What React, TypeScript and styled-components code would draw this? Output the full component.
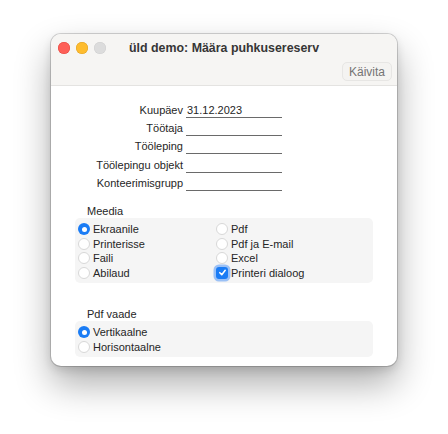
import { Fragment } from "react";
import styled, { createGlobalStyle } from "styled-components";

const Global = createGlobalStyle`
  html, body {
    margin: 0;
    background: #ffffff;
  }
  body {
    font-family: "Liberation Sans", "Noto Sans", sans-serif;
    color: #262626;
    -webkit-font-smoothing: antialiased;
  }
`;

const Page = styled.div`
  padding: 34px 0 0 51px;
  height: 434px;
  box-sizing: border-box;
`;

const Window = styled.div`
  width: 346px;
  height: 332px;
  border-radius: 10px;
  overflow: hidden;
  background: #ffffff;
  box-shadow: 0 0 0 1px rgba(0, 0, 0, 0.16), 0 18px 36px rgba(0, 0, 0, 0.32),
    0 4px 10px rgba(0, 0, 0, 0.12);
  display: flex;
  flex-direction: column;
`;

const TitleBar = styled.div`
  background: #f6f5f3;
  height: 52px;
  border-bottom: 1px solid #e4e3e1;
  box-sizing: border-box;
  display: grid;
  grid-template-rows: 27px 1fr;
`;

const TitleRow = styled.div`
  display: flex;
  align-items: center;
  padding: 1px 0 0 7px;
`;

const Lights = styled.div`
  display: flex;
  gap: 6px;
`;

const Light = styled.span<{ $c: string; $b: string }>`
  width: 12px;
  height: 12px;
  border-radius: 50%;
  background: ${(p) => p.$c};
  box-shadow: inset 0 0 0 0.5px ${(p) => p.$b};
`;

const Title = styled.div`
  margin-left: 23px;
  font-weight: 700;
  font-size: 12.4px;
  color: #363636;
`;

const ToolRow = styled.div`
  display: flex;
  justify-content: flex-end;
  align-items: flex-start;
  padding: 1px 5px 0 0;
`;

const ToolButton = styled.button`
  height: 19px;
  padding: 0 6px;
  font-family: inherit;
  font-size: 12px;
  color: #747474;
  background: #f4f3f1;
  border: 1px solid #e7e6e4;
  border-radius: 5px;
`;

const Content = styled.div`
  flex: 1;
  padding: 17px 24px 0 24px;
  font-size: 11px;
`;

const Fields = styled.div`
  display: grid;
  grid-template-columns: 108px 96px;
  column-gap: 3px;
  row-gap: 3.2px;
`;

const Label = styled.div`
  text-align: right;
  line-height: 15px;
`;

const Field = styled.div`
  line-height: 14px;
  height: 14px;
  border-bottom: 1px solid #6a6a6a;
  padding-left: 1px;
`;

const Section = styled.div<{ $top: number }>`
  margin-top: ${(p) => p.$top}px;
`;

const Legend = styled.div`
  padding-left: 12px;
  line-height: 13px;
`;

const Group = styled.div<{ $rows: number }>`
  background: #f5f5f5;
  border-radius: 5px;
  padding: 4px 3px 3px 3px;
  display: grid;
  grid-template-columns: repeat(2, 138px);
  grid-auto-flow: column;
  grid-template-rows: repeat(${(p) => p.$rows}, 14.5px);
`;

const Option = styled.label`
  display: flex;
  align-items: center;
  gap: 3px;
  line-height: 14px;
  white-space: nowrap;
`;

const Radio = styled.span<{ $on?: boolean }>`
  width: 12px;
  height: 12px;
  box-sizing: border-box;
  border-radius: 50%;
  flex: none;
  background: ${(p) => (p.$on ? "#1a7cf5" : "#ffffff")};
  border: ${(p) => (p.$on ? "none" : "1px solid #d8d8d8")};
  display: flex;
  align-items: center;
  justify-content: center;
  &::after {
    content: "";
    display: ${(p) => (p.$on ? "block" : "none")};
    width: 5px;
    height: 5px;
    border-radius: 50%;
    background: #fff;
  }
`;

const Check = styled.span`
  width: 12px;
  height: 12px;
  border-radius: 3px;
  flex: none;
  background: #1a7cf5;
  box-shadow: 0 0 0 2.5px rgba(80, 150, 245, 0.55);
  display: flex;
  align-items: center;
  justify-content: center;
`;

type Opt = { text: string; on?: boolean; check?: boolean };

const media: Opt[] = [
  { text: "Ekraanile", on: true },
  { text: "Printerisse" },
  { text: "Faili" },
  { text: "Abilaud" },
  { text: "Pdf" },
  { text: "Pdf ja E-mail" },
  { text: "Excel" },
  { text: "Printeri dialoog", check: true },
];

const pdfView: Opt[] = [{ text: "Vertikaalne", on: true }, { text: "Horisontaalne" }];

const fields: [string, string][] = [
  ["Kuupäev", "31.12.2023"],
  ["Töötaja", ""],
  ["Tööleping", ""],
  ["Töölepingu objekt", ""],
  ["Konteerimisgrupp", ""],
];

function OptionItem({ o }: { o: Opt }) {
  return (
    <Option>
      {o.check ? (
        <Check>
          <svg width="9" height="9" viewBox="0 0 10 10">
            <path d="M2 5.2 L4.2 7.4 L8 2.6" fill="none" stroke="#fff" strokeWidth="1.7" strokeLinecap="round" strokeLinejoin="round" />
          </svg>
        </Check>
      ) : (
        <Radio $on={o.on} />
      )}
      {o.text}
    </Option>
  );
}

export default function App() {
  return (
    <Page>
      <Global />
      <Window>
        <TitleBar>
          <TitleRow>
            <Lights>
              <Light $c="#fe5f57" $b="#e2463f" />
              <Light $c="#febc2e" $b="#dfa023" />
              <Light $c="#dcdcdc" $b="#cfcfcf" />
            </Lights>
            <Title>üld demo: Määra puhkusereserv</Title>
          </TitleRow>
          <ToolRow>
            <ToolButton>Käivita</ToolButton>
          </ToolRow>
        </TitleBar>
        <Content>
          <Fields>
            {fields.map(([l, v]) => (
              <Fragment key={l}>
                <Label>{l}</Label>
                <Field>{v}</Field>
              </Fragment>
            ))}
          </Fields>
          <Section $top={14}>
            <Legend>Meedia</Legend>
            <Group $rows={4}>
              {media.map((o) => (
                <OptionItem key={o.text} o={o} />
              ))}
            </Group>
          </Section>
          <Section $top={25}>
            <Legend>Pdf vaade</Legend>
            <Group $rows={2}>
              {pdfView.map((o) => (
                <OptionItem key={o.text} o={o} />
              ))}
            </Group>
          </Section>
        </Content>
      </Window>
    </Page>
  );
}
